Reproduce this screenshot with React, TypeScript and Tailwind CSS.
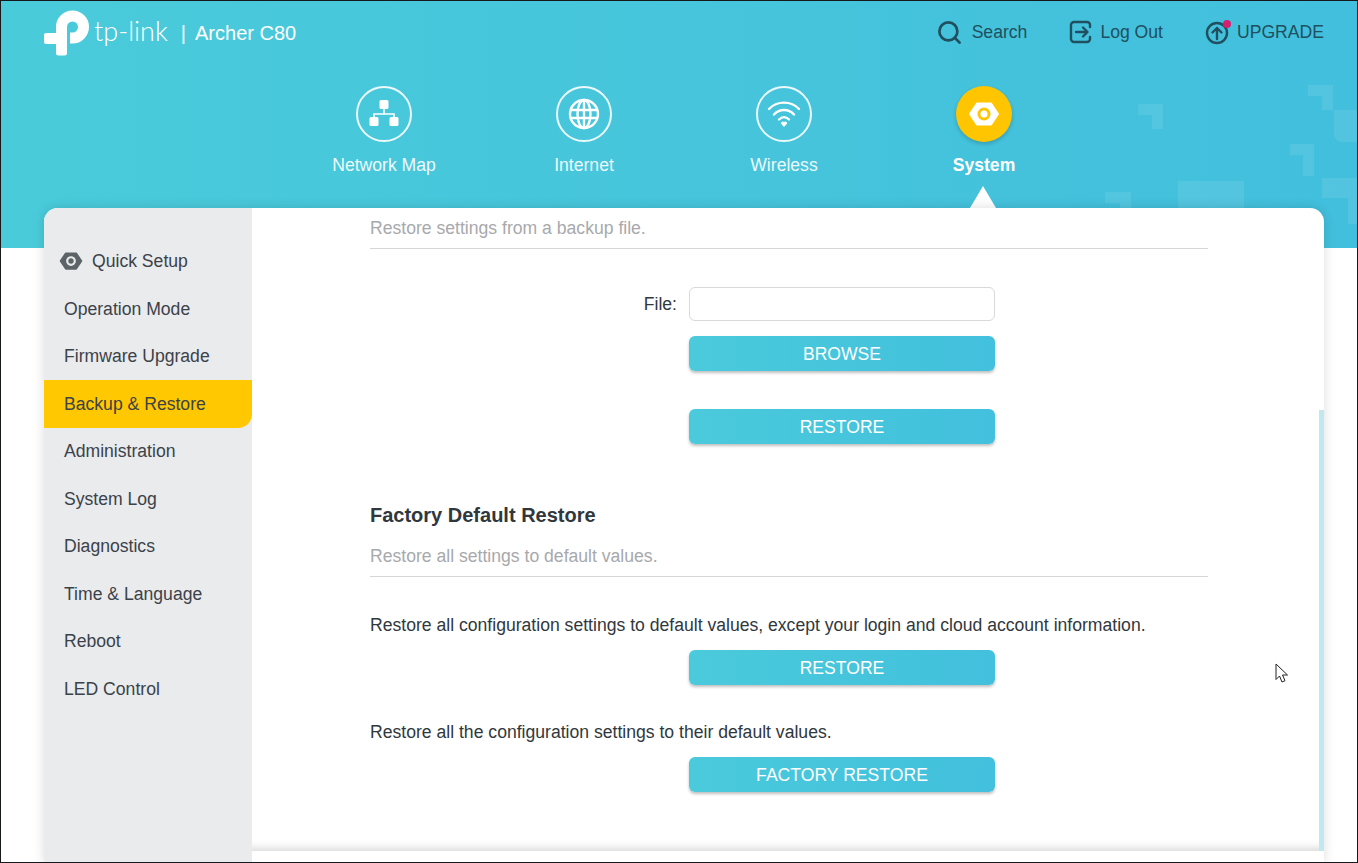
import { Search } from 'lucide-react'

const sideItems = [
  'Operation Mode',
  'Firmware Upgrade',
  'Backup & Restore',
  'Administration',
  'System Log',
  'Diagnostics',
  'Time & Language',
  'Reboot',
  'LED Control',
]

function Logo() {
  return (
    <svg width="46" height="46" viewBox="0 0 46 46" className="shrink-0">
      <rect x="0" y="23" width="20" height="11" rx="2" fill="#fff" />
      <path
        d="M17.5 43.5V17A11 11 0 1 1 28.5 28H26"
        fill="none"
        stroke="#fff"
        strokeWidth="11"
      />
      <rect x="12" y="38" width="11" height="7.5" rx="2.5" fill="#fff" />
    </svg>
  )
}

function GearIcon({ size }: { size: number }) {
  return (
    <svg width={size} height={size} viewBox="0 0 32 32" fill="currentColor">
      <path
        fillRule="evenodd"
        stroke="currentColor"
        strokeWidth="2"
        strokeLinejoin="round"
        d="M2 16 9 5.5 23 5.5 30 16 23 26.5 9 26.5ZM16 8.5a7.5 7.5 0 1 0 0 15a7.5 7.5 0 1 0 0-15Z"
      />
      <circle cx="16" cy="16" r="3.6" />
    </svg>
  )
}

function NetworkIcon() {
  return (
    <svg width="32" height="32" viewBox="0 0 32 32" fill="#fff">
      <rect x="11.5" y="2" width="9" height="9" rx="1.5" />
      <path d="M16 10v6M6 22v-6h20v6" fill="none" stroke="#fff" strokeWidth="1.6" />
      <rect x="1.5" y="19" width="9" height="9" rx="1.5" />
      <rect x="21.5" y="19" width="9" height="9" rx="1.5" />
    </svg>
  )
}

function GlobeIcon() {
  return (
    <svg width="32" height="32" viewBox="0 0 32 32" fill="none" stroke="#fff" strokeWidth="2.4">
      <circle cx="16" cy="16" r="14" />
      <ellipse cx="16" cy="16" rx="6.5" ry="14" />
      <path d="M16 2v28M3 12h26M3 20h26" />
    </svg>
  )
}

function WifiIcon() {
  return (
    <svg width="34" height="32" viewBox="0 0 34 32" fill="none" stroke="#fff" strokeWidth="2.4" strokeLinecap="round">
      <path d="M2 11C10 2.500 24 2.500 32 11" />
      <path d="M7 16.500C12.500 10.500 21.500 10.500 27 16.500" />
      <path d="M12 21.500C15 18.500 19 18.500 22 21.500" />
      <path d="M17 29l-3.200-3.500a2 2 0 0 1 3.200-1.500a2 2 0 0 1 3.200 1.500Z" fill="#fff" stroke="none" />
    </svg>
  )
}

function LogOutIcon() {
  return (
    <svg width="24" height="24" viewBox="0 0 24 24" fill="none" stroke="currentColor" strokeWidth="2.4" strokeLinecap="round" strokeLinejoin="round">
      <path d="M21 7V5a3 3 0 0 0-3-3H5a3 3 0 0 0-3 3v14a3 3 0 0 0 3 3h13a3 3 0 0 0 3-3v-2" />
      <path d="M7 12h11M14 7.500l4.500 4.500L14 16.500" />
    </svg>
  )
}

function UpgradeIcon() {
  return (
    <svg width="26" height="26" viewBox="0 0 26 26" fill="none" stroke="currentColor" strokeWidth="2.4" strokeLinecap="round" strokeLinejoin="round">
      <circle cx="12" cy="14" r="10" />
      <path d="M12 20v-11M7.500 13.500 12 9l4.500 4.500" />
      <circle cx="22" cy="5" r="4" fill="#d81e6f" stroke="none" />
    </svg>
  )
}

function BlueButton({ label, className }: { label: string; className: string }) {
  return (
    <button className={`block h-[35px] w-[306px] ml-[319px] rounded-[6px] bg-gradient-to-r from-[#4acadb] to-[#42c0dd] text-[17.6px] leading-[34px] text-white shadow-[0_2px_3px_rgba(0,0,0,0.25)] ${className}`}>
      {label}
    </button>
  )
}

function NavItem({ label, icon, active }: { label: string; icon: React.ReactNode; active?: boolean }) {
  return (
    <div className="relative flex w-[200px] flex-col items-center">
      <div
        className={
          active
            ? 'flex h-[56px] w-[56px] items-center justify-center rounded-full bg-[#ffc500] text-white shadow-[0_2px_4px_rgba(0,0,0,0.2)]'
            : 'flex h-[56px] w-[56px] items-center justify-center rounded-full border-[2.5px] border-white/90'
        }
      >
        {icon}
      </div>
      <span className={`mt-[13px] text-[17.6px] leading-[20px] text-white ${active ? 'font-bold' : 'opacity-90'}`}>
        {label}
      </span>
      {active && (
        <div className="absolute left-1/2 top-[100px] -ml-[14px] h-0 w-0 border-x-[13px] border-b-[22px] border-x-transparent border-b-white" />
      )}
    </div>
  )
}

export default function App() {
  return (
    <div className="relative box-border h-[863px] w-[1358px] overflow-hidden border border-[#16191c] bg-white font-['Liberation_Sans',Arial,sans-serif] text-[17.6px] text-[#30383d]">
      {/* Header */}
      <header className="relative h-[247px] bg-gradient-to-r from-[#4acbda] to-[#42bfdd]">
        {/* background pixel pattern */}
        <svg className="absolute left-0 top-0" width="1358" height="247" fill="#fff" fillOpacity="0.09">
          <path d="M1137 103h25v25h-11v-14h-14Z" />
          <path d="M1307 84h25v25h-11v-14h-14Z" />
          <path d="M1333 109h24v32h-16a8 8 0 0 1-8-8Z" />
          <path d="M1289 143h24v32h-11v-21h-13Z" />
          <path d="M1177 180h66v28h-66Z" />
          <path d="M1321 177h36v46h-10v-26h-26Z" />
          <path d="M1104 191h26v17h-11v-6h-15Z" />
        </svg>

        <div className="relative flex h-[63px] items-center justify-between pl-[43px] pr-[33px]">
          <div className="flex items-center">
            <Logo />
            <span className="ml-[4px] mt-[-4px] font-['Lato',sans-serif] text-[27px] font-light leading-none text-white">tp-link</span>
            <span className="ml-[13px] text-[20px] text-white">|</span>
            <span className="ml-[9px] text-[20px] text-white">Archer C80</span>
          </div>
          <div className="flex items-center gap-[42px] text-[#20505f]">
            <div className="flex items-center gap-[9px]">
              <Search size={27} strokeWidth={2.4} />
              <span>Search</span>
            </div>
            <div className="flex items-center gap-[7px]">
              <LogOutIcon />
              <span>Log Out</span>
            </div>
            <div className="flex items-center gap-[6px]">
              <UpgradeIcon />
              <span>UPGRADE</span>
            </div>
          </div>
        </div>

        <nav className="relative mt-[22px] flex pl-[283px]">
          <NavItem label="Network Map" icon={<NetworkIcon />} />
          <NavItem label="Internet" icon={<GlobeIcon />} />
          <NavItem label="Wireless" icon={<WifiIcon />} />
          <NavItem label="System" icon={<GearIcon size={32} />} active />
        </nav>
      </header>

      {/* Card */}
      <div className="relative -mt-[40px] ml-[43px] flex h-[655px] w-[1280px] rounded-t-[14px] bg-white shadow-[0_0_12px_rgba(0,0,0,0.14)]">
        {/* Sidebar */}
        <aside className="w-[208px] shrink-0 rounded-tl-[14px] bg-[#e9ebed] pt-[29.5px] text-[#3c4249]">
          <div className="flex h-[47.5px] items-center gap-[9px] pl-[15px]">
            <span className="text-[#5c6468]"><GearIcon size={24} /></span>
            <span>Quick Setup</span>
          </div>
          {sideItems.map((item) => (
            <div
              key={item}
              className={
                item === 'Backup & Restore'
                  ? 'flex h-[47.5px] items-center rounded-br-[14px] bg-[#ffc800] pl-[20px]'
                  : 'flex h-[47.5px] items-center pl-[20px]'
              }
            >
              {item}
            </div>
          ))}
        </aside>

        {/* Main */}
        <main className="relative h-[643px] flex-1 overflow-hidden shadow-[inset_0_-10px_10px_-8px_rgba(0,0,0,0.18)]">
          <div className="ml-[118px] w-[838px]">
            <p className="h-[41px] border-b border-[#d6d6d6] leading-[40px] text-[#a7a9ac]">Restore settings from a backup file.</p>

            <div className="mt-[38px] flex items-center">
              <label className="mr-[12px] w-[307px] text-right">File:</label>
              <input className="box-border h-[34px] w-[306px] rounded-[6px] border border-[#d9d9d9] bg-white" />
            </div>
            <BlueButton label="BROWSE" className="mt-[15px]" />
            <BlueButton label="RESTORE" className="mt-[38px]" />

            <h2 className="mt-[57px] text-[20px] font-bold leading-[28px]">Factory Default Restore</h2>
            <p className="mt-[7px] h-[41px] border-b border-[#d6d6d6] leading-[40px] text-[#a7a9ac]">Restore all settings to default values.</p>

            <p className="mt-[38px] leading-[20px]">Restore all configuration settings to default values, except your login and cloud account information.</p>
            <BlueButton label="RESTORE" className="mt-[15px]" />

            <p className="mt-[37px] leading-[20px]">Restore all the configuration settings to their default values.</p>
            <BlueButton label="FACTORY RESTORE" className="mt-[15px]" />
          </div>

          {/* scrollbar */}
          <div className="absolute bottom-0 right-0 top-[202px] w-[5px] bg-[#c0e8ef]" />
        </main>
      </div>

      {/* mouse cursor */}
      <svg className="absolute left-[1274px] top-[662px]" width="14" height="22" viewBox="0 0 14 22">
        <path d="M1 1v15.500l3.500-3.500 2.500 6 3-1.300-2.500-5.700h5Z" fill="#fff" stroke="#222" strokeWidth="1" />
      </svg>
    </div>
  )
}
